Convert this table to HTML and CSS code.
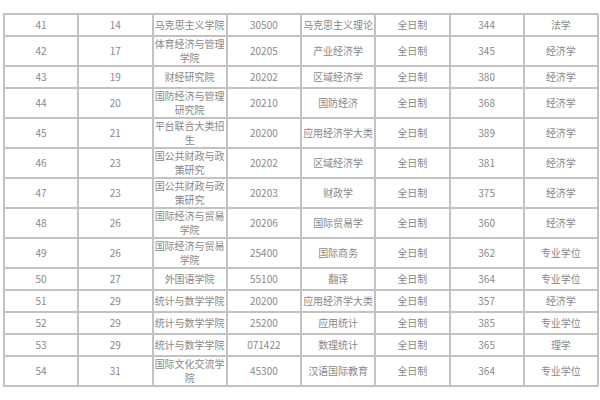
FILE: index.html
```html
<!DOCTYPE html>
<html lang="zh">
<head>
<meta charset="utf-8">
<title>录取分数表</title>
<link rel="stylesheet" href="styles.css">
</head>
<body>
<div class="page">
<table class="score-table">
<tbody>
<tr><td>41</td><td>14</td><td>马克思主义学院</td><td>30500</td><td>马克思主义理论</td><td>全日制</td><td>344</td><td>法学</td></tr>
<tr><td>42</td><td>17</td><td>体育经济与管理学院</td><td>20205</td><td>产业经济学</td><td>全日制</td><td>345</td><td>经济学</td></tr>
<tr><td>43</td><td>19</td><td>财经研究院</td><td>20202</td><td>区域经济学</td><td>全日制</td><td>380</td><td>经济学</td></tr>
<tr><td>44</td><td>20</td><td>国防经济与管理研究院</td><td>20210</td><td>国防经济</td><td>全日制</td><td>368</td><td>经济学</td></tr>
<tr><td>45</td><td>21</td><td>平台联合大类招生</td><td>20200</td><td>应用经济学大类</td><td>全日制</td><td>389</td><td>经济学</td></tr>
<tr><td>46</td><td>23</td><td>国公共财政与政策研究</td><td>20202</td><td>区域经济学</td><td>全日制</td><td>381</td><td>经济学</td></tr>
<tr><td>47</td><td>23</td><td>国公共财政与政策研究</td><td>20203</td><td>财政学</td><td>全日制</td><td>375</td><td>经济学</td></tr>
<tr><td>48</td><td>26</td><td>国际经济与贸易学院</td><td>20206</td><td>国际贸易学</td><td>全日制</td><td>360</td><td>经济学</td></tr>
<tr><td>49</td><td>26</td><td>国际经济与贸易学院</td><td>25400</td><td>国际商务</td><td>全日制</td><td>362</td><td>专业学位</td></tr>
<tr><td>50</td><td>27</td><td>外国语学院</td><td>55100</td><td>翻译</td><td>全日制</td><td>364</td><td>专业学位</td></tr>
<tr><td>51</td><td>29</td><td>统计与数学学院</td><td>20200</td><td>应用经济学大类</td><td>全日制</td><td>357</td><td>经济学</td></tr>
<tr><td>52</td><td>29</td><td>统计与数学学院</td><td>25200</td><td>应用统计</td><td>全日制</td><td>385</td><td>专业学位</td></tr>
<tr><td>53</td><td>29</td><td>统计与数学学院</td><td>071422</td><td>数理统计</td><td>全日制</td><td>365</td><td>理学</td></tr>
<tr><td>54</td><td>31</td><td>国际文化交流学院</td><td>45300</td><td>汉语国际教育</td><td>全日制</td><td>364</td><td>专业学位</td></tr>
</tbody>
</table>
</div>
</body>
</html>
```

FILE: styles.css
```css
html, body {
  margin: 0;
  padding: 0;
  background: #ffffff;
}

.page {
  padding: 13px 1px 0 3px;
}

.score-table {
  width: 596px;
  table-layout: fixed;
  border-collapse: separate;
  border-spacing: 0;
  border: 1px solid #c2c2c2;
  font-family: "Noto Sans CJK SC", "Noto Sans", sans-serif;
  font-size: 10px;
  line-height: 14px;
  color: #888888;
}

.score-table td {
  border: 1px solid #c2c2c2;
  height: 20px;
  padding: 0 1px;
  text-align: center;
  vertical-align: middle;
  word-break: break-all;
}
```
